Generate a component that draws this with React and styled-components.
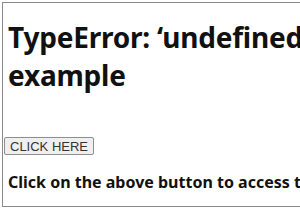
import React from 'react';
import styled, { createGlobalStyle } from 'styled-components';

const Global = createGlobalStyle`
  html, body {
    margin: 0;
    background: #ffffff;
    overflow: hidden;
  }
`;

const Page = styled.div`
  width: 300px;
  height: 210px;
  padding: 2px 0 0 2px;
  box-sizing: border-box;
  overflow: hidden;
`;

const Frame = styled.div`
  width: 400px;
  height: 205px;
  box-sizing: border-box;
  border: 1px solid #8a8a8a;
  border-right: none;
  padding: 0 0 0 5px;
  font-family: "Noto Sans", "Open Sans", sans-serif;
  color: #111;
`;

const Title = styled.h1`
  margin: 15px 0 0;
  font-size: 28px;
  line-height: 38px;
  font-weight: 700;
  letter-spacing: -0.2px;
  white-space: nowrap;
`;

const Button = styled.button`
  display: block;
  margin: 43px 0 0 -4px;
  font-family: "Liberation Sans", Arial, sans-serif;
  font-size: 13px;
  color: #333;
  background: #efefef;
  border: 1px solid #8f8f8f;
  border-radius: 2px;
  padding: 0 5px;
  height: 18px;
  white-space: nowrap;
`;

const Note = styled.p`
  margin: 16px 0 0;
  font-size: 16px;
  font-weight: 700;
  white-space: nowrap;
`;

export default function App() {
  return (
    <>
      <Global />
      <Page>
        <Frame>
          <Title>
            TypeError: ‘undefined’ is not a function
            <br />
            example
          </Title>
          <Button>CLICK HERE</Button>
          <Note>Click on the above button to access the function</Note>
        </Frame>
      </Page>
    </>
  );
}
